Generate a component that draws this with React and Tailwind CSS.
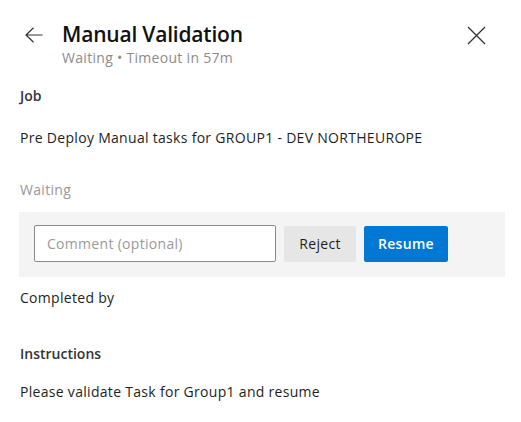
import React, { useState } from "react";

const font = { fontFamily: '"Segoe UI", "Open Sans", sans-serif' };

function ArrowLeft() {
  return (
    <svg width="18" height="16" viewBox="0 0 18 16" fill="none" className="shrink-0">
      <path d="M17.5 8H1M8.5 0.7L1 8l7.5 7.3" stroke="#333" strokeWidth="1.2" />
    </svg>
  );
}

function CloseX() {
  return (
    <svg width="19" height="19" viewBox="0 0 19 19" fill="none">
      <path d="M1 1l17 17M18 1L1 18" stroke="#333" strokeWidth="1.3" />
    </svg>
  );
}

export default function App() {
  const [comment, setComment] = useState("");

  return (
    <div
      className="w-[521px] h-[422px] bg-white text-[14px] leading-[20px] tracking-[0.3px] text-[#1e1e1e]"
      style={font}
    >
      <div className="flex items-start pt-[20px] pl-[25px] pr-[35px]">
        <div className="h-[28px] flex items-center pt-[1px]">
          <ArrowLeft />
        </div>
        <div className="ml-[19px] flex-1">
          <div className="text-[21px] leading-[28px] font-semibold tracking-[-0.2px] text-[#111]">
            Manual Validation
          </div>
          <div className="text-[#8c8c8c]">Waiting • Timeout in 57m</div>
        </div>
        <div className="pt-[6px]">
          <CloseX />
        </div>
      </div>

      <div className="px-[20px]">
        <div className="mt-[18px] font-semibold tracking-normal text-[#333]">Job</div>
        <div className="mt-[22px]">
          Pre Deploy Manual tasks for GROUP1 - DEV NORTHEUROPE
        </div>
        <div className="mt-[32px] text-[#999]">Waiting</div>
      </div>

      <div className="ml-[19px] w-[486px] mt-[12px] bg-[#f4f4f4] pt-[13px] pb-[15px] px-[15px] flex items-center gap-[8px]">
        <input
          value={comment}
          onChange={(e) => setComment(e.target.value)}
          placeholder="Comment (optional)"
          className="w-[242px] h-[37px] border border-[#8a8a8a] rounded-[2px] bg-white px-[12px] outline-none tracking-[0.3px] placeholder:text-[#9a9a9a]"
          style={font}
        />
        <button
          className="w-[72px] h-[36px] rounded-[2px] bg-[#e6e6e6] text-[#1e1e1e] tracking-[0.3px]"
          style={font}
        >
          Reject
        </button>
        <button
          className="w-[84px] h-[36px] rounded-[2px] bg-[#0078d4] text-white font-semibold"
          style={font}
        >
          Resume
        </button>
      </div>

      <div className="px-[20px]">
        <div className="mt-[11px]">Completed by</div>
        <div className="mt-[36px] font-semibold tracking-normal text-[#333]">Instructions</div>
        <div className="mt-[18px]">Please validate Task for Group1 and resume</div>
      </div>
    </div>
  );
}
